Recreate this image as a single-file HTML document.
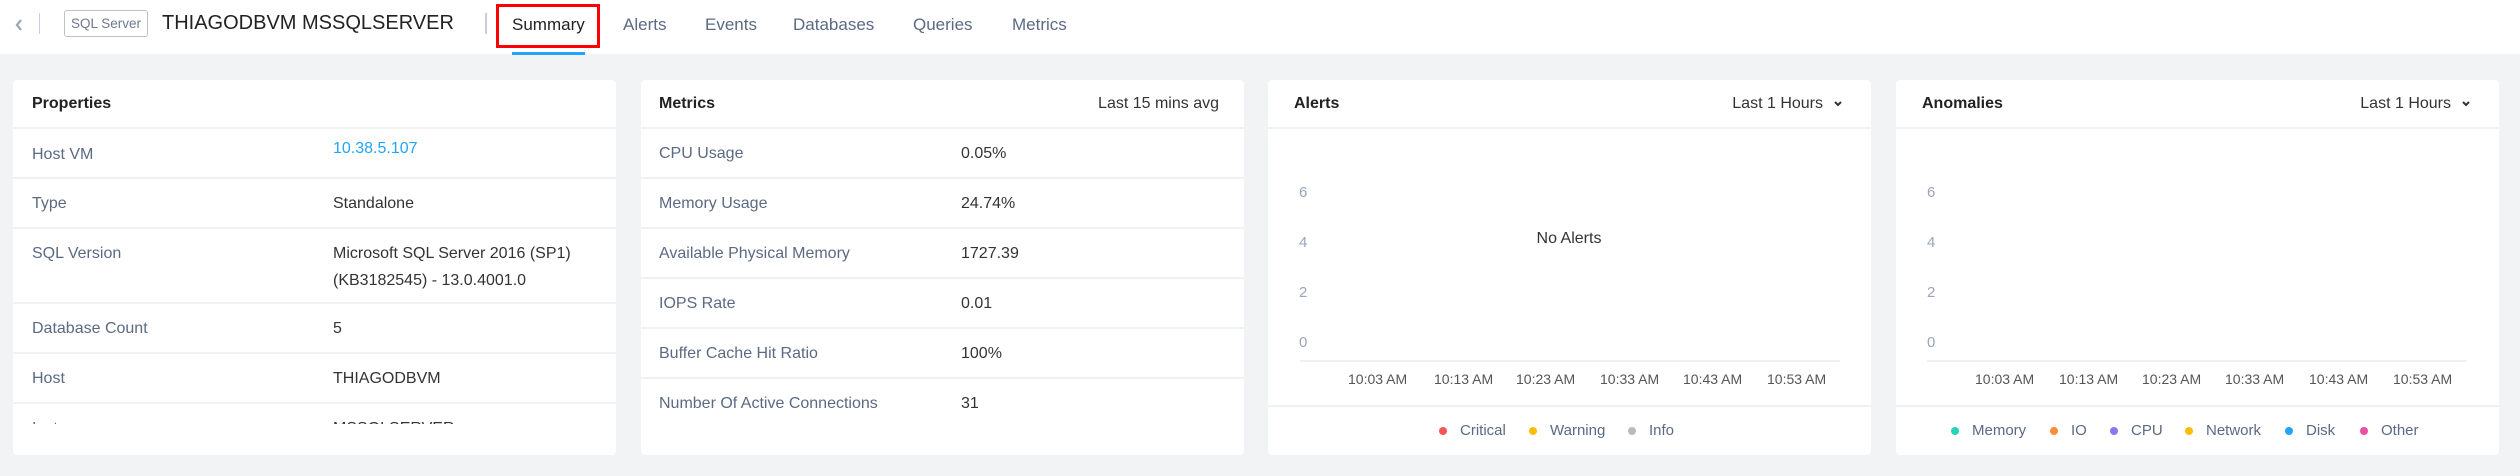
<!DOCTYPE html>
<html><head><meta charset="utf-8"><style>
*{margin:0;padding:0;box-sizing:border-box}
body{width:2520px;height:476px;background:#f2f3f5;font-family:"Liberation Sans",sans-serif;position:relative;overflow:hidden;color:#333}
.a{position:absolute;white-space:nowrap}
.hdr{position:absolute;left:0;top:0;width:2520px;height:54px;background:#fff}
.card{position:absolute;top:80px;width:603px;height:375px;background:#fff;border-radius:4px;overflow:hidden}
.ch{position:absolute;left:0;top:0;right:0;height:49px;border-bottom:2px solid #f0f1f3}
.ct{position:absolute;top:15px;font-size:16px;font-weight:bold;color:#222}
.row{position:absolute;left:0;right:0;border-bottom:2px solid #f0f1f3}
.lb{position:absolute;font-size:16px;color:#5b6a82}
.vl{position:absolute;left:320px;font-size:16px;color:#333}
.yl{position:absolute;font-size:15px;color:#9aa5b8}
.xl{position:absolute;font-size:14px;color:#555;top:291px}
.dot{position:absolute;width:8px;height:8px;border-radius:50%;top:347px}
.lg{position:absolute;font-size:15px;color:#5b6a82;top:342px}
</style></head><body>
<div class="hdr">
 <svg class="a" style="left:14px;top:18px" width="10" height="14" viewBox="0 0 10 14"><path d="M7 2 L3 7 L7 12" fill="none" stroke="#9aa3ad" stroke-width="2.2"/></svg>
 <div class="a" style="left:39px;top:13px;width:1px;height:21px;background:#ccd"></div>
 <div class="a" style="left:64px;top:10px;width:84px;height:27px;border:1px solid #b9c2cf;border-radius:3px;font-size:13.5px;color:#6b7a90;text-align:center;line-height:25px">SQL Server</div>
 <div class="a" style="left:162px;top:12px;font-size:20px;color:#222">THIAGODBVM MSSQLSERVER</div>
 <div class="a" style="left:485px;top:13px;width:2px;height:21px;background:#ccd"></div>
 <div class="a" style="left:496px;top:4px;width:104px;height:44px;border:3px solid #f00"></div>
 <div class="a" style="left:512px;top:15px;font-size:17px;color:#222">Summary</div>
 <div class="a" style="left:623px;top:15px;font-size:17px;color:#5b6a82">Alerts</div>
 <div class="a" style="left:705px;top:15px;font-size:17px;color:#5b6a82">Events</div>
 <div class="a" style="left:793px;top:15px;font-size:17px;color:#5b6a82">Databases</div>
 <div class="a" style="left:913px;top:15px;font-size:17px;color:#5b6a82">Queries</div>
 <div class="a" style="left:1012px;top:15px;font-size:17px;color:#5b6a82">Metrics</div>
 <div class="a" style="left:512px;top:52px;width:73px;height:3px;background:#22a5f7"></div>
</div>

<div class="card" style="left:13px">
 <div class="ch"><div class="ct" style="left:19px">Properties</div></div>
 <div style="position:absolute;left:0;right:0;top:0;height:344px;overflow:hidden">
 <div class="row" style="top:49px;height:50px"><div class="lb" style="left:19px;top:17px">Host VM</div><div class="vl" style="top:11px;color:#22a5f7">10.38.5.107</div></div>
 <div class="row" style="top:99px;height:50px"><div class="lb" style="left:19px;top:16px">Type</div><div class="vl" style="top:16px">Standalone</div></div>
 <div class="row" style="top:149px;height:75px"><div class="lb" style="left:19px;top:16px">SQL Version</div><div class="vl" style="top:16px;line-height:27px;margin-top:-5px">Microsoft SQL Server 2016 (SP1)<br>(KB3182545) - 13.0.4001.0</div></div>
 <div class="row" style="top:224px;height:50px"><div class="lb" style="left:19px;top:16px">Database Count</div><div class="vl" style="top:16px">5</div></div>
 <div class="row" style="top:274px;height:50px"><div class="lb" style="left:19px;top:16px">Host</div><div class="vl" style="top:16px">THIAGODBVM</div></div>
 <div class="row" style="top:324px;height:50px;border:0"><div class="lb" style="left:19px;top:16px">Instance</div><div class="vl" style="top:16px">MSSQLSERVER</div></div>
 </div>
</div>

<div class="card" style="left:641px">
 <div class="ch"><div class="ct" style="left:18px">Metrics</div><div class="a" style="right:25px;top:15px;font-size:16px;color:#333">Last 15 mins avg</div></div>
 <div class="row" style="top:49px;height:50px"><div class="lb" style="left:18px;top:16px">CPU Usage</div><div class="vl" style="top:16px">0.05%</div></div>
 <div class="row" style="top:99px;height:50px"><div class="lb" style="left:18px;top:16px">Memory Usage</div><div class="vl" style="top:16px">24.74%</div></div>
 <div class="row" style="top:149px;height:50px"><div class="lb" style="left:18px;top:16px">Available Physical Memory</div><div class="vl" style="top:16px">1727.39</div></div>
 <div class="row" style="top:199px;height:50px"><div class="lb" style="left:18px;top:16px">IOPS Rate</div><div class="vl" style="top:16px">0.01</div></div>
 <div class="row" style="top:249px;height:50px"><div class="lb" style="left:18px;top:16px">Buffer Cache Hit Ratio</div><div class="vl" style="top:16px">100%</div></div>
 <div class="row" style="top:299px;height:50px;border:0"><div class="lb" style="left:18px;top:16px">Number Of Active Connections</div><div class="vl" style="top:16px">31</div></div>
</div>

<div class="card" style="left:1268px">
 <div class="ch"><div class="ct" style="left:26px">Alerts</div><div class="a" style="right:48px;top:15px;font-size:16px;color:#333">Last 1 Hours</div>
 <svg class="a" style="right:28px;top:20px" width="10" height="8" viewBox="0 0 10 8"><path d="M2 2 L5 5 L8 2" fill="none" stroke="#333" stroke-width="2"/></svg></div>
 <div class="yl" style="left:31px;top:104px">6</div><div class="yl" style="left:31px;top:154px">4</div><div class="yl" style="left:31px;top:204px">2</div><div class="yl" style="left:31px;top:254px">0</div>
 <div class="a" style="left:32px;top:280px;width:540px;height:2px;background:#eef0f2"></div>
 <div class="a" style="left:301px;top:150px;font-size:16px;color:#333;transform:translateX(-50%)">No Alerts</div>
 <div class="xl" style="left:80px">10:03 AM</div><div class="xl" style="left:166px">10:13 AM</div><div class="xl" style="left:248px">10:23 AM</div><div class="xl" style="left:332px">10:33 AM</div><div class="xl" style="left:415px">10:43 AM</div><div class="xl" style="left:499px">10:53 AM</div>
 <div class="a" style="left:0;right:0;top:325px;height:2px;background:#f0f1f3"></div>
 <div class="dot" style="left:171px;background:#f55656"></div><div class="lg" style="left:192px">Critical</div>
 <div class="dot" style="left:261px;background:#ffbc0b"></div><div class="lg" style="left:282px">Warning</div>
 <div class="dot" style="left:360px;background:#b5bac4"></div><div class="lg" style="left:381px">Info</div>
</div>

<div class="card" style="left:1896px">
 <div class="ch"><div class="ct" style="left:26px">Anomalies</div><div class="a" style="right:48px;top:15px;font-size:16px;color:#333">Last 1 Hours</div>
 <svg class="a" style="right:28px;top:20px" width="10" height="8" viewBox="0 0 10 8"><path d="M2 2 L5 5 L8 2" fill="none" stroke="#333" stroke-width="2"/></svg></div>
 <div class="yl" style="left:31px;top:104px">6</div><div class="yl" style="left:31px;top:154px">4</div><div class="yl" style="left:31px;top:204px">2</div><div class="yl" style="left:31px;top:254px">0</div>
 <div class="a" style="left:31px;top:280px;width:540px;height:2px;background:#eef0f2"></div>
 <div class="xl" style="left:79px">10:03 AM</div><div class="xl" style="left:163px">10:13 AM</div><div class="xl" style="left:246px">10:23 AM</div><div class="xl" style="left:329px">10:33 AM</div><div class="xl" style="left:413px">10:43 AM</div><div class="xl" style="left:497px">10:53 AM</div>
 <div class="a" style="left:0;right:0;top:325px;height:2px;background:#f0f1f3"></div>
 <div class="dot" style="left:55px;background:#26d3bd"></div><div class="lg" style="left:76px">Memory</div>
 <div class="dot" style="left:154px;background:#ff8c3a"></div><div class="lg" style="left:175px">IO</div>
 <div class="dot" style="left:214px;background:#8a76f0"></div><div class="lg" style="left:235px">CPU</div>
 <div class="dot" style="left:289px;background:#ffbc0b"></div><div class="lg" style="left:310px">Network</div>
 <div class="dot" style="left:389px;background:#22a5f7"></div><div class="lg" style="left:410px">Disk</div>
 <div class="dot" style="left:464px;background:#ed4fa5"></div><div class="lg" style="left:485px">Other</div>
</div>
</body></html>
